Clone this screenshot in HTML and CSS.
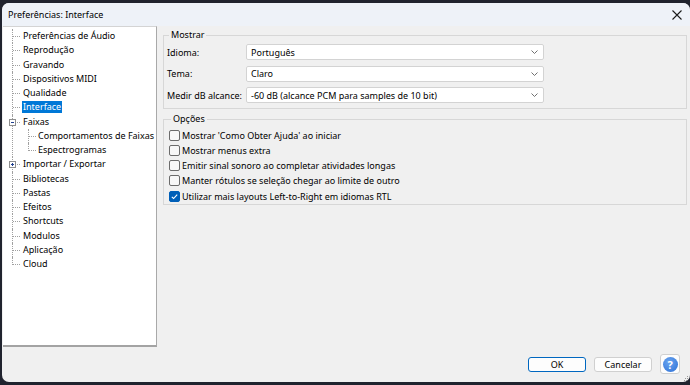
FILE: index.html
```html
<!DOCTYPE html>
<html lang="pt">
<head>
    <meta charset="UTF-8">
    <title>Preferências: Interface</title>
    <link rel="stylesheet" href="styles.css">
</head>
<body>
    <div class="window">
        <div class="titlebar">
            <span class="title">Preferências: Interface</span>
            <svg class="close" width="10" height="10" viewBox="0 0 10 10">
                <path d="M0.5 0.5 L9.5 9.5 M9.5 0.5 L0.5 9.5" stroke="#1b1b1b" stroke-width="1.1" fill="none"/>
            </svg>
        </div>

        <div class="main">
            <!-- Category tree -->
            <div class="tree">
                <ul class="tree-list">
                    <li><div class="row"><span class="label">Preferências de Áudio</span></div></li>
                    <li><div class="row"><span class="label">Reprodução</span></div></li>
                    <li><div class="row"><span class="label">Gravando</span></div></li>
                    <li><div class="row"><span class="label">Dispositivos MIDI</span></div></li>
                    <li><div class="row"><span class="label">Qualidade</span></div></li>
                    <li><div class="row"><span class="label selected">Interface</span></div></li>
                    <li>
                        <div class="row">
                            <svg class="toggle" width="7" height="7" viewBox="0 0 7 7">
                                <rect x="0.5" y="0.5" width="6" height="6" fill="#fff" stroke="#8f8f8f"/>
                                <path d="M2 3.5 H5" stroke="#1f3f8f"/>
                            </svg>
                            <span class="label">Faixas</span>
                        </div>
                        <ul class="tree-list sub">
                            <li><div class="row"><span class="label">Comportamentos de Faixas</span></div></li>
                            <li><div class="row"><span class="label">Espectrogramas</span></div></li>
                        </ul>
                    </li>
                    <li>
                        <div class="row">
                            <svg class="toggle" width="7" height="7" viewBox="0 0 7 7">
                                <rect x="0.5" y="0.5" width="6" height="6" fill="#fff" stroke="#8f8f8f"/>
                                <path d="M2 3.5 H5 M3.5 2 V5" stroke="#1f3f8f"/>
                            </svg>
                            <span class="label">Importar / Exportar</span>
                        </div>
                    </li>
                    <li><div class="row"><span class="label">Bibliotecas</span></div></li>
                    <li><div class="row"><span class="label">Pastas</span></div></li>
                    <li><div class="row"><span class="label">Efeitos</span></div></li>
                    <li><div class="row"><span class="label">Shortcuts</span></div></li>
                    <li><div class="row"><span class="label">Modulos</span></div></li>
                    <li><div class="row"><span class="label">Aplicação</span></div></li>
                    <li><div class="row"><span class="label">Cloud</span></div></li>
                </ul>
            </div>

            <!-- Settings pane -->
            <div class="pane">
                <fieldset class="group">
                    <legend>Mostrar</legend>
                    <div class="fields">
                        <label>Idioma:</label>
                        <div class="combo">
                            <span>Português</span>
                            <svg width="7" height="4" viewBox="0 0 7 4"><path d="M0.5 0.5 L3.5 3.5 L6.5 0.5" stroke="#707070" fill="none"/></svg>
                        </div>
                        <label>Tema:</label>
                        <div class="combo">
                            <span>Claro</span>
                            <svg width="7" height="4" viewBox="0 0 7 4"><path d="M0.5 0.5 L3.5 3.5 L6.5 0.5" stroke="#707070" fill="none"/></svg>
                        </div>
                        <label>Medir dB alcance:</label>
                        <div class="combo">
                            <span>-60 dB (alcance PCM para samples de 10 bit)</span>
                            <svg width="7" height="4" viewBox="0 0 7 4"><path d="M0.5 0.5 L3.5 3.5 L6.5 0.5" stroke="#707070" fill="none"/></svg>
                        </div>
                    </div>
                </fieldset>

                <fieldset class="group options">
                    <legend>Opções</legend>
                    <div class="check"><span class="box"></span>Mostrar 'Como Obter Ajuda' ao iniciar</div>
                    <div class="check"><span class="box"></span>Mostrar menus extra</div>
                    <div class="check"><span class="box"></span>Emitir sinal sonoro ao completar atividades longas</div>
                    <div class="check"><span class="box"></span>Manter rótulos se seleção chegar ao limite de outro</div>
                    <div class="check">
                        <span class="box checked">
                            <svg width="9" height="9" viewBox="0 0 9 9"><path d="M1.8 4.8 L3.6 6.5 L7.2 2.6" stroke="#fff" stroke-width="1.1" fill="none"/></svg>
                        </span>
                        Utilizar mais layouts Left-to-Right em idiomas RTL
                    </div>
                </fieldset>
            </div>
        </div>

        <div class="footer">
            <button class="btn default">OK</button>
            <button class="btn">Cancelar</button>
            <button class="btn help"><span class="help-icon">?</span></button>
            <svg class="grip" width="5" height="5" viewBox="0 0 5 5">
                <rect x="3" y="0" width="1" height="1" fill="#9a9a9a"/>
                <rect x="1" y="2" width="1" height="1" fill="#9a9a9a"/>
                <rect x="3" y="2" width="1" height="1" fill="#9a9a9a"/>
                <rect x="0" y="4" width="1" height="1" fill="#9a9a9a"/>
                <rect x="2" y="4" width="1" height="1" fill="#9a9a9a"/>
                <rect x="4" y="4" width="1" height="1" fill="#9a9a9a"/>
            </svg>
        </div>
    </div>
</body>
</html>
```

FILE: styles.css
```css
body {
    margin: 0;
    padding: 3px 0 0 2px;
    background-color: #20232e;
    font-family: "Noto Sans", "DejaVu Sans", sans-serif;
    font-size: 9px;
    color: #000;
    height: 385px;
    box-sizing: border-box;
    overflow: hidden;
}
.window {
    width: 688px;
    height: 379px;
    background-color: #f0f0f0;
    border-radius: 7px;
    overflow: hidden;
    display: flex;
    flex-direction: column;
}
.titlebar {
    height: 23px;
    flex: none;
    background-color: #eef2f8;
    display: flex;
    align-items: center;
    justify-content: space-between;
    padding: 0 8px 0 6px;
}
.close {
    margin-top: 1px;
}
.main {
    height: 321px;
    flex: none;
    display: flex;
}
.tree {
    width: 154px;
    margin-left: 1px;
    background-color: #fff;
    border-top: 1px solid #d4d4d4;
    border-right: 1px solid #a9a9a9;
    border-bottom: 2px solid #a3a3a3;
    padding-top: 2px;
    box-sizing: border-box;
}
.tree-list {
    list-style: none;
    margin: 0;
    padding: 0;
}
.tree-list li {
    position: relative;
    padding-left: 19px;
}
.tree-list li::before {
    content: "";
    position: absolute;
    left: 10px;
    top: 7px;
    width: 7px;
    border-top: 1px dotted #a0a0a0;
}
.tree-list li::after {
    content: "";
    position: absolute;
    left: 9px;
    top: 0;
    bottom: 0;
    border-left: 1px dotted #a0a0a0;
}
.tree-list li:last-child::after {
    bottom: auto;
    height: 8px;
}
.tree-list.sub li {
    padding-left: 15px;
}
.tree-list.sub li::before {
    left: 7px;
}
.tree-list.sub li::after {
    left: 6px;
}
.row {
    height: 14.25px;
    display: flex;
    align-items: center;
}
.label {
    line-height: 12px;
    padding: 0 1px;
    white-space: nowrap;
}
.label.selected {
    background-color: #0078d7;
    color: #fff;
}
.toggle {
    position: absolute;
    left: 6px;
    top: 4px;
    z-index: 1;
}
.pane {
    flex: 1;
    padding: 3px 3px 0 6px;
}
.group {
    margin: 0;
    border: 1px solid #d7d7d7;
    padding: 3px 3px 5px;
}
.group legend {
    margin-left: 2px;
    padding: 0 2px;
    line-height: 12px;
}
.fields {
    display: grid;
    grid-template-columns: 79px 298px;
    grid-auto-rows: 16px;
    row-gap: 5.5px;
    align-items: center;
}
.combo {
    height: 16px;
    box-sizing: border-box;
    background-color: #fff;
    border: 1px solid #d3d3d3;
    border-radius: 2px;
    display: flex;
    align-items: center;
    justify-content: space-between;
    padding: 0 5px 0 4px;
}
.options {
    margin-top: 4px;
    padding: 2.5px 3px 0 5px;
}
.check {
    height: 15.25px;
    display: flex;
    align-items: center;
    gap: 2px;
}
.box {
    width: 11px;
    height: 11px;
    box-sizing: border-box;
    border: 1px solid #6b6b6b;
    border-radius: 2px;
    background-color: #f7f7f7;
    display: flex;
    align-items: center;
    justify-content: center;
}
.box.checked {
    background-color: #005fb8;
    border-color: #005fb8;
}
.footer {
    flex: 1;
    position: relative;
    display: flex;
    justify-content: flex-end;
    align-items: center;
    gap: 8px;
    padding: 0 10px 1px 0;
}
.btn {
    width: 58px;
    height: 15px;
    box-sizing: border-box;
    background-color: #fdfdfd;
    border: 1px solid #d0d0d0;
    border-radius: 3px;
    font-family: inherit;
    font-size: 9px;
    color: #000;
    padding: 0;
}
.btn.default {
    border-color: #0067c0;
}
.btn.help {
    width: 20px;
    height: 20px;
    display: flex;
    align-items: center;
    justify-content: center;
}
.help-icon {
    width: 15px;
    height: 15px;
    border-radius: 50%;
    background: radial-gradient(circle at 40% 35%, #6aa5f0, #2c6fd6);
    color: #fff;
    font-weight: bold;
    font-size: 11px;
    line-height: 15px;
    text-align: center;
}
.grip {
    position: absolute;
    right: 1px;
    bottom: 1px;
}
```
